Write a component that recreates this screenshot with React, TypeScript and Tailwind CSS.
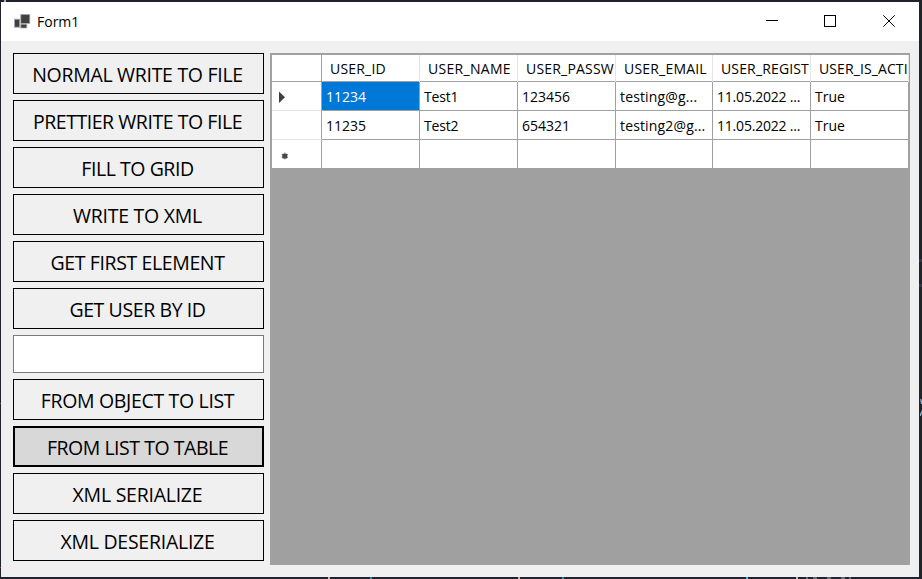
type Action = { label: string; fit: string; active?: boolean };

const topActions: Action[] = [
  { label: "NORMAL WRITE TO FILE", fit: "tracking-[-0.3px]" },
  { label: "PRETTIER WRITE TO FILE", fit: "tracking-[-0.45px]" },
  { label: "FILL TO GRID", fit: "tracking-[-0.45px]" },
  { label: "WRITE TO XML", fit: "tracking-[-0.27px]" },
  { label: "GET FIRST ELEMENT", fit: "tracking-[-0.38px]" },
  { label: "GET USER BY ID", fit: "tracking-[-0.4px]" },
];

const bottomActions: Action[] = [
  { label: "FROM OBJECT TO LIST", fit: "tracking-[-0.33px]" },
  { label: "FROM LIST TO TABLE", fit: "tracking-[-0.47px]", active: true },
  { label: "XML SERIALIZE", fit: "tracking-[-0.25px]" },
  { label: "XML DESERIALIZE", fit: "tracking-[-0.25px]" },
];

const headers = [
  { label: "USER_ID", fit: "tracking-[0.2px]" },
  { label: "USER_NAME", fit: "tracking-[0.3px]" },
  { label: "USER_PASSW", fit: "tracking-[0.2px]" },
  { label: "USER_EMAIL", fit: "tracking-[0.2px]" },
  { label: "USER_REGIST", fit: "tracking-[0.15px]" },
  { label: "USER_IS_ACTI", fit: "tracking-[0.1px]" },
];

const rows = [
  ["11234", "Test1", "123456", "testing@g...", "11.05.2022 ...", "True"],
  ["11235", "Test2", "654321", "testing2@g...", "11.05.2022 ...", "True"],
  ["", "", "", "", "", ""],
];

const cellFit = ["tracking-normal", "tracking-[-0.2px]", "tracking-normal", "tracking-[0.15px]", "tracking-[-0.2px]", "tracking-normal"];

const columns = "grid grid-cols-[50px_98px_98px_98px_97px_98px_98px]";

function ActionButton({ label, fit, active }: Action) {
  return (
    <button
      className={`flex h-[41px] shrink-0 items-center justify-center whitespace-nowrap pr-[2px] pt-[3px] text-[19.5px] leading-none ${fit} ${
        active ? "border-2 border-black bg-[#d8d8d8]" : "border border-black bg-[#f0f0f0]"
      }`}
    >
      {label}
    </button>
  );
}

function RowMarker({ index }: { index: number }) {
  if (index === 0) {
    return (
      <svg width="8" height="14" viewBox="0 0 8 14">
        <path d="M1 1.5 7 7.3 1 13Z" fill="#404040" />
      </svg>
    );
  }
  if (index === 2) {
    return (
      <svg width="14" height="12" viewBox="0 0 14 12">
        <path d="M6.8 2.5V9.5M3.6 4.2 10 7.8M10 4.2 3.6 7.8" stroke="#999" strokeWidth="1.2" />
        <rect x="4.3" y="3.8" width="5" height="4.8" rx="1" fill="#484848" />
      </svg>
    );
  }
  return null;
}

/* Slivers of the editor window that show round the form's edges. */
function Backdrop() {
  return (
    <svg width="922" height="579" viewBox="0 0 922 579" className="absolute inset-0">
      <rect width="922" height="579" fill="#22222e" />
      <rect x="4" width="2" height="2" fill="#8fb4c8" />
      <path d="M0 403h1v1H0zM0 567h1v1H0z" fill="#b03038" />
      <path d="M328 577h2v2h-2zM518 577h2v2h-2zM796 577h2v2h-2z" fill="#c8b8b0" />
      <path d="M370 577h2v2h-2zM562 577h2v2h-2z" fill="#458298" />
      <path d="M746 577h2v2h-2z" fill="#4fb8d0" />
      <path d="M806 577h2v2h-2zM813 577h4v2h-4zM827 577h4v2h-4zM841 577h4v2h-4zM849 577h2v2h-2z" fill="#686870" />
      <path d="M919 259h3v3h-3zM919 284h3v3h-3z" fill="#34344a" />
      <path d="M920 399h1l1 2v3h-1zM922 410v3l-1 3h-1v-2z" fill="#80b0d0" />
    </svg>
  );
}

export default function App() {
  return (
    <div className="relative h-[579px] w-[922px] overflow-hidden pb-[2px] pl-px pr-[3px] pt-[2px] font-['Open_Sans','Noto_Sans',sans-serif] text-black">
      <Backdrop />
      <div className="relative flex h-[575px] w-[918px] flex-col bg-[#f0f0f0]">
        <header className="flex h-[39px] shrink-0 items-center gap-[5px] bg-white pl-[13px] pr-[22px]">
          <svg width="18" height="16" viewBox="0 0 18 16">
            <g fill="#404040" stroke="#a8a8a8" strokeWidth=".8">
              <rect x="6.8" y=".4" width="9" height="9" />
              <rect x=".5" y="5.2" width="5.2" height="8" />
              <rect x="6.8" y="10.2" width="6" height="3.8" />
            </g>
          </svg>
          <span className="flex-1 text-[14px]">Form1</span>
          <svg width="132" height="13" viewBox="0 0 132 13" fill="none" stroke="#000">
            <path d="M1 5.5H13" />
            <rect x="59.5" y=".5" width="11" height="11" />
            <path d="m118.3.3 11.4 11.4m0-11.4-11.4 11.4" />
          </svg>
        </header>
        <main className="flex min-h-0 flex-1 gap-[6px] pb-[12px] pl-[12px] pr-[9px] pt-[12px]">
          <aside className="flex w-[251px] shrink-0 flex-col gap-[6px]">
            {topActions.map((a) => (
              <ActionButton key={a.label} {...a} />
            ))}
            <input className="h-[38px] shrink-0 border border-[#7a7a7a] bg-white px-2 outline-none" />
            {bottomActions.map((a) => (
              <ActionButton key={a.label} {...a} />
            ))}
          </aside>
          <section className="flex h-[512px] w-[640px] flex-col overflow-hidden border border-t-2 border-l-2 border-[#a0a0a5] bg-[#a0a0a0] text-[14px]">
            <div className={`${columns} h-[27px] shrink-0 border-b border-[#a0a0a0] bg-white`}>
              <div className="border-r border-[#a0a0a0]" />
              {headers.map((h) => (
                <div
                  key={h.label}
                  className={`whitespace-nowrap border-r border-[#e5e5e5] pl-[8px] leading-[27px] ${h.fit}`}
                >
                  {h.label}
                </div>
              ))}
            </div>
            {rows.map((row, i) => (
              <div key={i} className={`${columns} shrink-0 bg-white ${i < 2 ? "h-[29px]" : "h-[28px]"}`}>
                <div
                  className={`flex items-center border-r border-r-[#a0a0a0] pl-[6px] ${
                    i < 2 ? "border-b border-b-[#e5e5e5] pt-[2px]" : "pt-[3px]"
                  }`}
                >
                  <RowMarker index={i} />
                </div>
                {row.map((value, j) => (
                  <div
                    key={j}
                    className={`overflow-hidden whitespace-nowrap border-r border-[#a0a0a0] pl-[4px] leading-[29px] ${cellFit[j]} ${
                      i < 2 ? "border-b" : ""
                    } ${i === 0 && j === 0 ? "bg-[#0078d7] text-white" : ""}`}
                  >
                    {value}
                  </div>
                ))}
              </div>
            ))}
          </section>
        </main>
      </div>
    </div>
  );
}
